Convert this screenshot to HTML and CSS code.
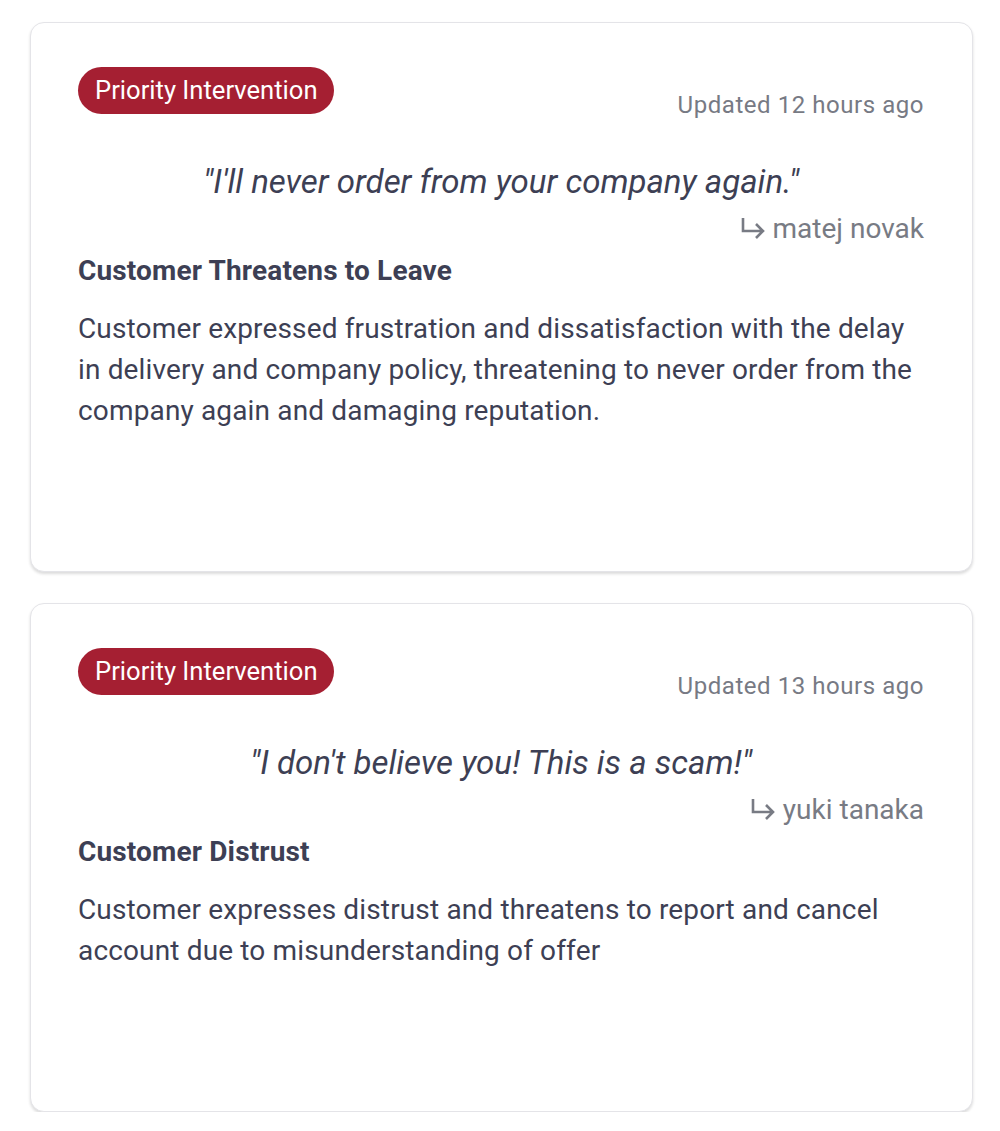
FILE: index.html
```html
<!DOCTYPE html>
<html lang="en">
<head>
<meta charset="utf-8">
<title>Interventions</title>
<link rel="stylesheet" href="styles.css">
</head>
<body>
<main class="list">
  <article class="card">
    <div class="card-head">
      <span class="badge">Priority Intervention</span>
      <span class="updated">Updated 12 hours ago</span>
    </div>
    <p class="quote">"I'll never order from your company again."</p>
    <div class="author">
      <svg class="arrow" viewBox="0 0 24 24" width="24" height="24" aria-hidden="true"><path d="M2 1V14H22M15 7L22 14L15 21" fill="none" stroke="currentColor" stroke-width="2.6"/></svg>
      <span>matej novak</span>
    </div>
    <h2 class="title">Customer Threatens to Leave</h2>
    <p class="body">Customer expressed frustration and dissatisfaction with the delay in delivery and company policy, threatening to never order from the company again and damaging reputation.</p>
  </article>
  <article class="card">
    <div class="card-head">
      <span class="badge">Priority Intervention</span>
      <span class="updated">Updated 13 hours ago</span>
    </div>
    <p class="quote">"I don't believe you! This is a scam!"</p>
    <div class="author">
      <svg class="arrow" viewBox="0 0 24 24" width="24" height="24" aria-hidden="true"><path d="M2 1V14H22M15 7L22 14L15 21" fill="none" stroke="currentColor" stroke-width="2.6"/></svg>
      <span>yuki tanaka</span>
    </div>
    <h2 class="title">Customer Distrust</h2>
    <p class="body">Customer expresses distrust and threatens to report and cancel account due to misunderstanding of offer</p>
  </article>
</main>
</body>
</html>
```
FILE: styles.css
```css
* { box-sizing: border-box; }
html, body { margin: 0; padding: 0; background: #fff; }
body {
  font-family: Roboto, "Noto Sans", "Liberation Sans", sans-serif;
  color: #3d3f54;
}
.list {
  padding: 22px 27px 0 30px;
  display: flex;
  flex-direction: column;
  gap: 31px;
}
.card {
  border: 1px solid #e4e4e8;
  border-radius: 14px;
  box-shadow: 0 2px 3px rgba(0,0,0,0.14);
  padding: 44px 48px 140px 47px;
  background: #fff;
}
.card-head {
  display: flex;
  justify-content: space-between;
  align-items: flex-end;
}
.badge {
  display: inline-block;
  background: #a51f32;
  color: #fff;
  font-size: 25.6px;
  line-height: 47px;
  height: 47px;
  padding: 0 16px 0 17px;
  border-radius: 24px;
}
.updated {
  font-size: 24px;
  color: #777a84;
  letter-spacing: 0.55px;
  line-height: 28px;
  margin-bottom: -5px;
}
.quote {
  margin: 48px 0 0;
  text-align: center;
  font-style: italic;
  font-size: 33px;
  line-height: 40px;
  color: #3d3f54;
}
.author {
  display: flex;
  justify-content: flex-end;
  align-items: center;
  gap: 8px;
  margin-top: 9px;
  font-size: 28px;
  line-height: 36px;
  color: #787b84;
}
.arrow { color: #787b84; }
.title {
  margin: 6px 0 0;
  font-size: 28px;
  font-weight: 700;
  line-height: 36px;
  letter-spacing: 0.15px;
}
.body {
  margin: 19px 0 0;
  font-size: 28px;
  line-height: 41px;
  letter-spacing: 0.15px;
}
```
